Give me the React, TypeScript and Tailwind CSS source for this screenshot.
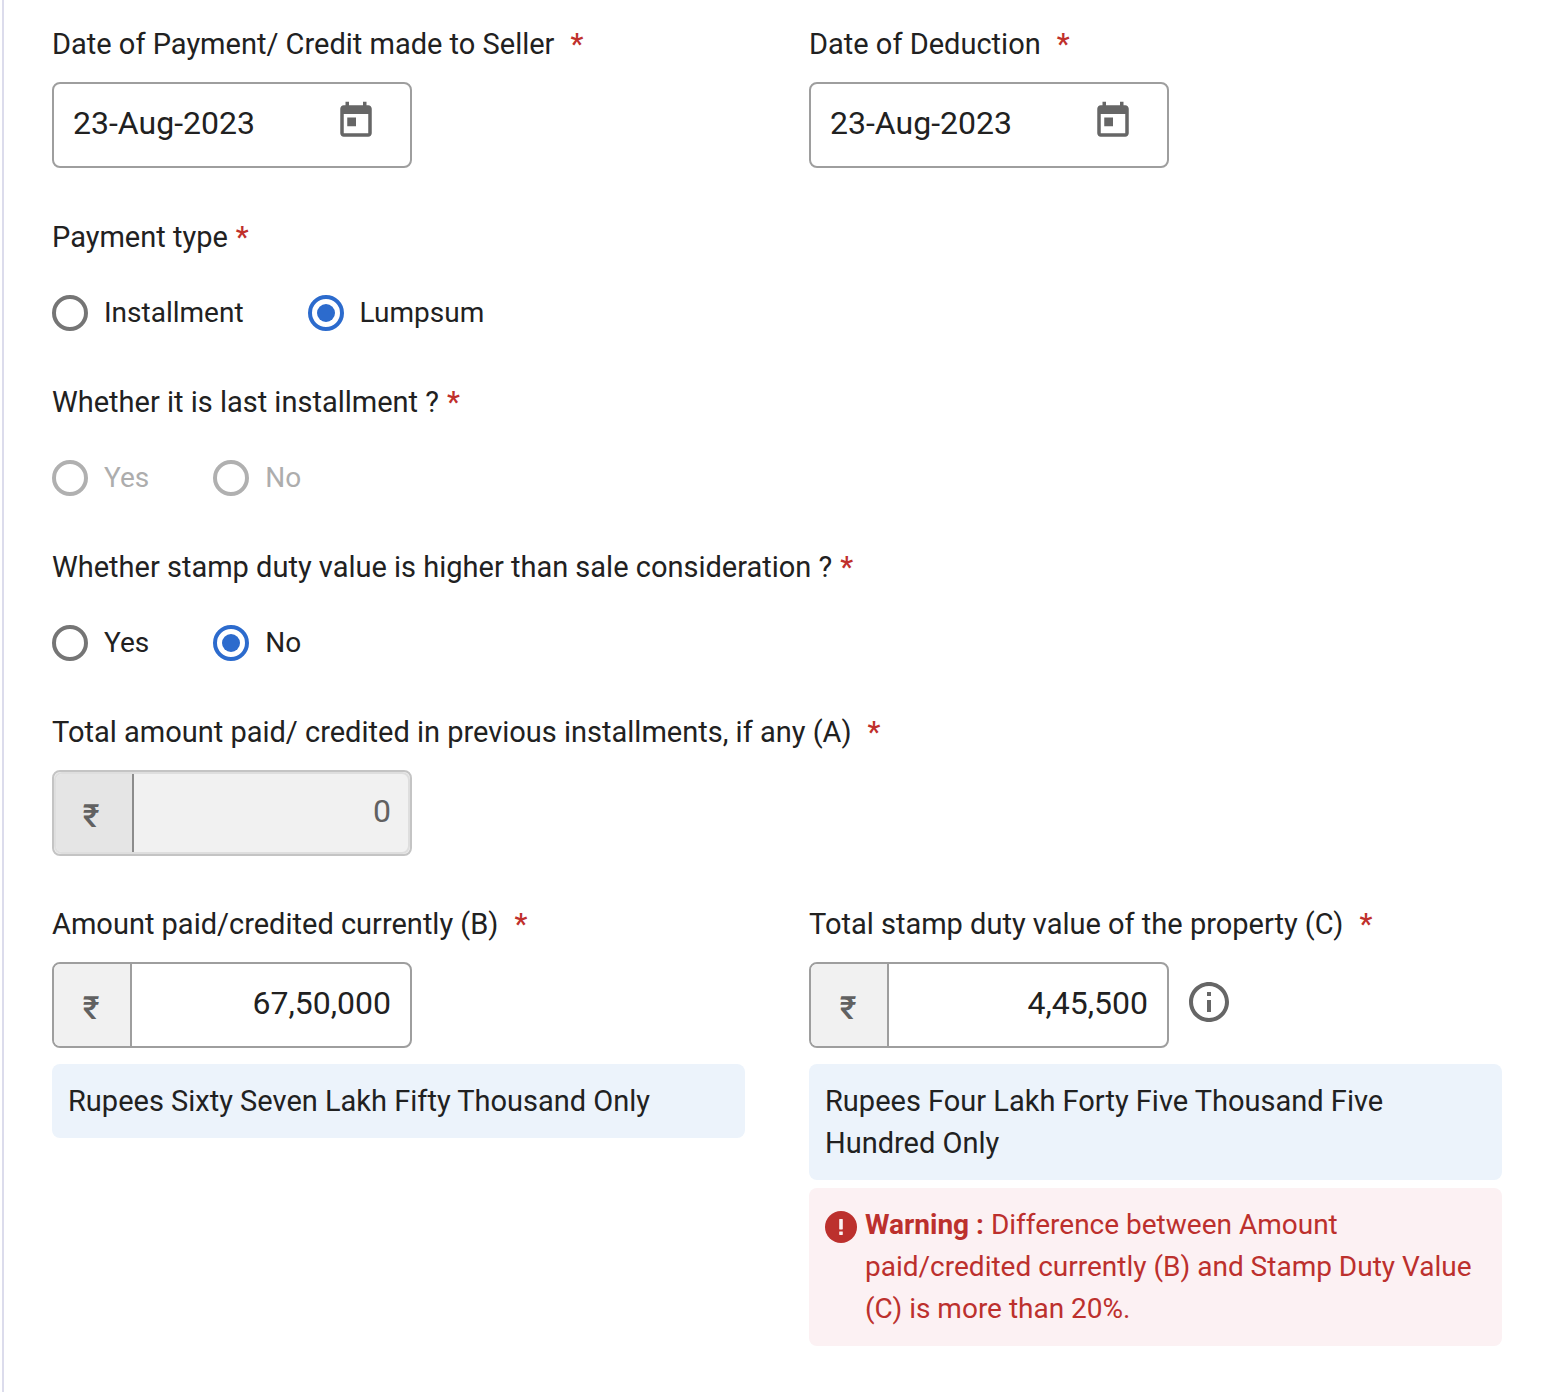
import React, { useState } from "react";

function Star({ wide = false }: { wide?: boolean }) {
  return (
    <span aria-hidden="true" className={wide ? "ml-4 font-medium text-[#c0302c]" : "ml-2 font-medium text-[#c0302c]"}>
      *
    </span>
  );
}

function CalendarIcon() {
  return (
    <svg viewBox="0 0 24 24" className="size-[42px] fill-[#666666]" aria-hidden="true">
      <path d="M19 3h-1V1h-2v2H8V1H6v2H5c-1.11 0-1.99.9-1.99 2L3 19c0 1.1.89 2 2 2h14c1.1 0 2-.9 2-2V5c0-1.1-.9-2-2-2zm0 16H5V8h14v11zM7 10h5v5H7z" />
    </svg>
  );
}

function InfoIcon() {
  return (
    <svg viewBox="0 0 24 24" className="size-12 fill-[#666666]" aria-hidden="true">
      <path d="M11 7h2v2h-2zm0 4h2v6h-2zm1-9C6.48 2 2 6.48 2 12s4.48 10 10 10 10-4.48 10-10S17.52 2 12 2zm0 18c-4.41 0-8-3.59-8-8s3.59-8 8-8 8 3.59 8 8-3.59 8-8 8z" />
    </svg>
  );
}

function ErrorIcon() {
  return (
    <svg viewBox="0 0 32 32" className="mt-[7px] size-8 shrink-0" aria-hidden="true">
      <circle cx="16" cy="16" r="16" fill="#bc302d" />
      <rect x="14.2" y="8" width="3.6" height="10.4" rx="0.6" fill="#fcf1f3" />
      <rect x="14.2" y="20.4" width="3.6" height="3.6" rx="0.4" fill="#fcf1f3" />
    </svg>
  );
}

function DateField({ id, label }: { id: string; label: string }) {
  return (
    <div>
      <label htmlFor={id} className="mb-[18px] block text-[29px] leading-10">
        {label}
        <Star wide />
      </label>
      <div className="flex h-[86px] w-full max-w-[360px] items-center rounded-lg border-2 border-[#9e9e9e] pr-[33px] pl-[19px]">
        <input id={id} type="text" defaultValue="23-Aug-2023" className="min-w-0 flex-1 pb-1 text-[32px] leading-10 outline-none" />
        <button type="button" aria-label="Open calendar" className="mb-2">
          <CalendarIcon />
        </button>
      </div>
    </div>
  );
}

function RadioRow({
  name,
  label,
  options,
  initial,
  disabled = false,
}: {
  name: string;
  label: string;
  options: string[];
  initial?: string;
  disabled?: boolean;
}) {
  const [value, setValue] = useState(initial);
  return (
    <fieldset disabled={disabled} className="mb-[51px]">
      <legend className="mb-[38px] text-[29px] leading-10">
        {label}
        <Star />
      </legend>
      <div className="flex gap-16">
        {options.map((option) => (
          <label key={option} className={disabled ? "flex items-center gap-4 leading-9 text-[#adadad]" : "flex items-center gap-4 leading-9"}>
            <input
              type="radio"
              name={name}
              checked={value === option}
              onChange={() => setValue(option)}
              className="size-9 appearance-none rounded-full border-4 border-[#757575] bg-clip-content p-[5px] checked:border-[#2c6bcd] checked:bg-[#2c6bcd] disabled:border-[#b0b0b0]"
            />
            {option}
          </label>
        ))}
      </div>
    </fieldset>
  );
}

function AmountField({
  id,
  label,
  value,
  disabled = false,
  children,
}: {
  id: string;
  label: string;
  value: string;
  disabled?: boolean;
  children?: React.ReactNode;
}) {
  return (
    <div>
      <label htmlFor={id} className="mb-[18px] block text-[29px] leading-10">
        {label}
        <Star wide />
      </label>
      <div className="flex items-center gap-4">
        <div
          className={
            disabled
              ? "h-[86px] w-full max-w-[360px] rounded-lg border-2 border-[#c4c4c4] bg-[#f1f1f1]"
              : "h-[86px] w-full max-w-[360px] rounded-lg border-2 border-[#9e9e9e]"
          }
        >
          <div
            className={
              disabled
                ? "flex h-full overflow-hidden rounded-lg border-2 border-[#dedede] text-[#616161]"
                : "flex h-full overflow-hidden rounded-md"
            }
          >
            <span
              className={
                disabled
                  ? "flex w-[78px] shrink-0 items-center justify-center border-r-2 border-[#8c8c8c] bg-[#e5e5e5] pt-1.5 pr-1.5 text-[32px] leading-10 font-medium"
                  : "flex w-[78px] shrink-0 items-center justify-center border-r-2 border-[#9e9e9e] bg-[#f1f1f1] pt-1.5 pr-0.5 text-[32px] leading-10 font-medium text-[#616161]"
              }
            >
              ₹
            </span>
            <input
              id={id}
              type="text"
              defaultValue={value}
              disabled={disabled}
              className={
                disabled
                  ? "min-w-0 flex-1 pr-[17px] pb-1 text-right text-[32px] leading-10"
                  : "min-w-0 flex-1 pr-[19px] pb-1 text-right text-[32px] leading-10 outline-none"
              }
            />
          </div>
        </div>
        {children}
      </div>
    </div>
  );
}

export default function App() {
  return (
    <main className="min-h-screen bg-white pl-[2px] font-['Roboto',sans-serif] text-[28px] text-[#212121]">
      <form className="min-h-screen border-l-2 border-[#dcdcec] pt-6 pr-10 pb-11 pl-12">
        <div className="mb-[49px] grid grid-cols-2 gap-16">
          <DateField id="payment-date" label="Date of Payment/ Credit made to Seller" />
          <DateField id="deduction-date" label="Date of Deduction" />
        </div>

        <RadioRow name="payment-type" label="Payment type" options={["Installment", "Lumpsum"]} initial="Lumpsum" />
        <RadioRow name="last-installment" label="Whether it is last installment ?" options={["Yes", "No"]} disabled />
        <RadioRow
          name="stamp-duty-higher"
          label="Whether stamp duty value is higher than sale consideration ?"
          options={["Yes", "No"]}
          initial="No"
        />

        <div className="mb-12">
          <AmountField id="amount-a" label="Total amount paid/ credited in previous installments, if any (A)" value="0" disabled />
        </div>

        <div className="grid grid-cols-2 items-start gap-16">
          <div>
            <AmountField id="amount-b" label="Amount paid/credited currently (B)" value="67,50,000" />
            <p className="mt-4 rounded-lg bg-[#ecf3fb] p-4 text-[29px] leading-[42px]">Rupees Sixty Seven Lakh Fifty Thousand Only</p>
          </div>
          <div>
            <AmountField id="amount-c" label="Total stamp duty value of the property (C)" value="4,45,500">
              <button type="button" aria-label="More information" className="mb-[6px] shrink-0">
                <InfoIcon />
              </button>
            </AmountField>
            <p className="mt-4 rounded-lg bg-[#ecf3fb] p-4 text-[29px] leading-[42px]">
              Rupees Four Lakh Forty Five Thousand Five Hundred Only
            </p>
            <div role="alert" className="mt-2 flex gap-2 rounded-lg bg-[#fcf1f3] p-4 leading-[42px] text-[#bc302d]">
              <ErrorIcon />
              <p>
                <strong className="font-bold">Warning :</strong> Difference between Amount paid/credited currently (B) and Stamp Duty
                Value (C) is more than 20%.
              </p>
            </div>
          </div>
        </div>
      </form>
    </main>
  );
}
